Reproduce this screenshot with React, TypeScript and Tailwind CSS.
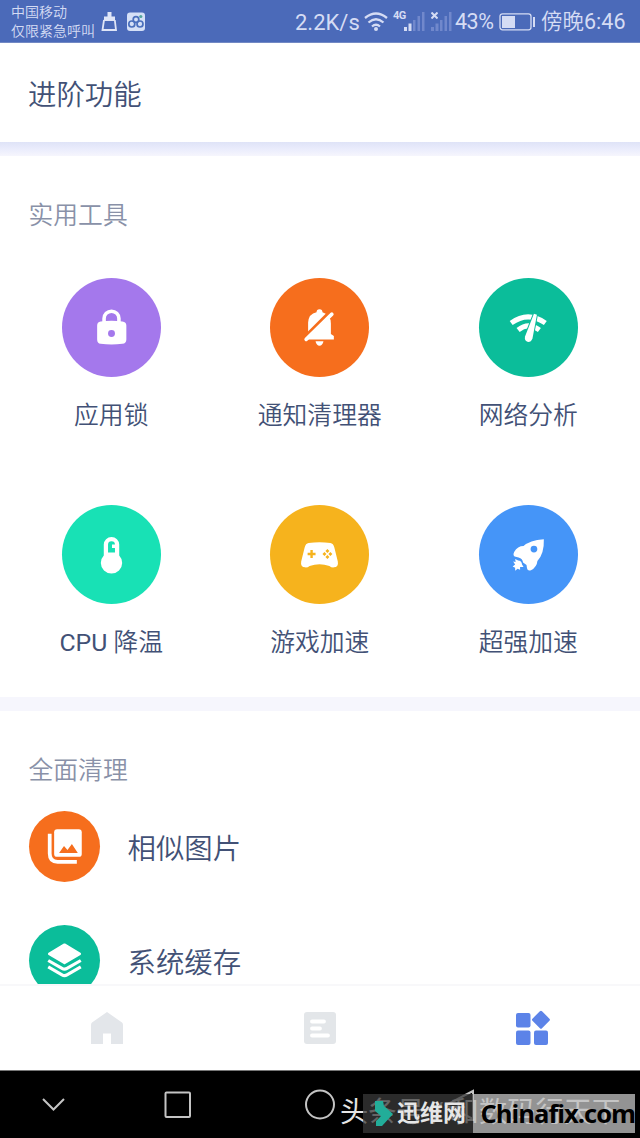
import React from "react";

type Tool = { label: React.ReactNode; color: string; icon: React.ReactNode };

const tools: Tool[] = [
  {
    label: "应用锁",
    color: "bg-[#a478ec]",
    icon: (
      <svg viewBox="0 0 100 100" className="w-full h-full">
        <path d="M42.5 45V41a7.5 7.5 0 0 1 15 0V45" fill="none" stroke="#fff" strokeWidth="3.6" />
        <path d="M39 44Q50 42.5 61 44Q65 44.5 65 48V62Q65 66 61 66.5Q50 68 39 66.5Q35.5 66 35.5 62V48Q35.5 44.5 39 44Z" fill="#fff" />
        <circle cx="50" cy="56" r="3.5" fill="#a478ec" />
      </svg>
    ),
  },
  {
    label: "通知清理器",
    color: "bg-[#f66e1d]",
    icon: (
      <svg viewBox="0 0 100 100" className="w-full h-full">
        <path d="M38.5 60V45Q39 36 47 34.5Q47 31.5 50 31.5Q53 31.5 53 34.5Q61.5 37 61.5 46V56.5L64.5 58.5V62H37Z" fill="#fff" />
        <path d="M46 64H54Q53 68.5 50 68.5Q47 68.5 46 64Z" fill="#fff" />
        <path d="M34 60.8L60.5 34.3" stroke="#f66e1d" strokeWidth="3.4" />
        <path d="M36.5 62L62.5 36.5" stroke="#fff" strokeWidth="3.6" strokeLinecap="round" />
      </svg>
    ),
  },
  {
    label: "网络分析",
    color: "bg-[#0bbd9a]",
    icon: (
      <svg viewBox="0 0 100 100" className="w-full h-full" fill="none">
        <path d="M32.5 45.5Q49.5 33 67 45.5" stroke="#fff" strokeWidth="5" />
        <path d="M39.5 52.5Q50 44 61 52.5" stroke="#fff" strokeWidth="5" />
        <path d="M55.5 36L58.5 37L54 61Q52.5 65 49 64.5Q45.5 63 46.5 59Z" fill="#fff" stroke="#0bbd9a" strokeWidth="2" paintOrder="stroke" />
      </svg>
    ),
  },
  {
    label: (
      <>
        <span className="font-normal">CPU</span> 降温
      </>
    ),
    color: "bg-[#18e1b5]",
    icon: (
      <svg viewBox="0 0 100 100" className="w-full h-full">
        <path d="M42.2 51V40a7.8 7.8 0 0 1 15.6 0V51a10.8 10.8 0 1 1-15.6 0Z" fill="#fff" />
        <path d="M46.5 48V40a3.5 3.5 0 0 1 7 0H50.5V43.5H53.5V48Z" fill="#18e1b5" />
      </svg>
    ),
  },
  {
    label: "游戏加速",
    color: "bg-[#f6b31d]",
    icon: (
      <svg viewBox="0 0 100 100" className="w-full h-full">
        <path d="M39 38.5Q50 37 61 38.5Q64 39 65 43L68.5 57Q69.5 62.5 64.5 63Q62 63.2 60 61.5Q50 58 40 61.5Q38 63.2 35.5 63Q30.5 62.5 31.5 57L35 43Q36 39 39 38.5Z" fill="#fff" />
        <path d="M42 45.5V53.5M38 49.5H46" stroke="#f6b31d" strokeWidth="2.4" />
        <path d="M58 44.5l2 2-2 2-2-2zM58 50.5l2 2-2 2-2-2zM55 47.5l2 2-2 2-2-2zM61 47.5l2 2-2 2-2-2z" fill="#f6b31d" />
      </svg>
    ),
  },
  {
    label: "超强加速",
    color: "bg-[#4595f8]",
    icon: (
      <svg viewBox="0 0 100 100" className="w-full h-full" fill="#fff">
        <path d="M65.5 34.5Q66 49 59 56.5Q58.5 62.5 52.5 66Q49 67 48.500 64L48 60.5L44.5 58Q44 54 40 53L36 52Q34 51 35.5 47.5Q39 41.500 45 41.5Q51 35.5 65.5 34.5Z" />
        <path d="M36.5 54.5L39.5 56Q43 56 43.500 60L45 62.5L41.5 62.5L41.5 65.5L39 64.5L36.5 66.5L36.5 63.5L34 62L36.5 60L34.5 57L37 57.5Z" />
        <circle cx="55.5" cy="44.5" r="3.4" fill="#4595f8" />
      </svg>
    ),
  },
];

const cleaners: Tool[] = [
  {
    label: "相似图片",
    color: "bg-[#f66e1d]",
    icon: (
      <svg viewBox="0 0 72 72" className="w-full h-full">
        <path d="M21 23V43Q21 51.5 29 51.5H48.5" fill="none" stroke="#fff" strokeWidth="3.8" />
        <rect x="25.5" y="18.5" width="28" height="28" rx="3" fill="#fff" />
        <path d="M30.5 42.5L35.5 35.5L39 39.5L43.5 33.5L49.5 42.5Z" fill="#f66e1d" />
      </svg>
    ),
  },
  {
    label: "系统缓存",
    color: "bg-[#0bbd9a]",
    icon: (
      <svg viewBox="0 0 72 72" className="w-full h-full">
        <path d="M36 20L51.5 29.2L36 38.4L20.5 29.2Z" fill="#fff" stroke="#fff" strokeWidth="2.6" strokeLinejoin="round" />
        <path d="M19.5 36L33.5 44Q36 45.5 38.5 44L52.5 36M19.5 42.5L33.5 50.5Q36 52 38.5 50.5L52.5 42.5" fill="none" stroke="#fff" strokeWidth="3.2" />
      </svg>
    ),
  },
];

const Signal = ({ first }: { first: string }) => (
  <svg width="21" height="20" viewBox="0 0 21 20" className="shrink-0">
    <g fill="#7188cc">
      <rect x="0" y="15" width="3" height="4" fill={first} />
      <rect x="4.5" y="11.5" width="3" height="7.5" fill={first} />
      <rect x="9" y="8" width="2.5" height="11" />
      <rect x="13.5" y="4" width="2.5" height="15" />
      <rect x="18" y="0" width="2.5" height="19" />
    </g>
  </svg>
);

const StatusBar: React.FC = () => (
  <header className="flex h-[43px] shrink-0 items-start bg-[#4b6ab9] border-b border-[#7289c4] text-[#d5dcf4]">
    <div className="w-[100px] shrink-0 pl-[11px] pt-[3px] text-[14px] leading-[19px] whitespace-nowrap">
      <div>中国移动</div>
      <div>仅限紧急呼叫</div>
    </div>
    <svg width="50" height="24" viewBox="100 10 50 24" className="mt-[10px] shrink-0" fill="none">
      <rect x="107.5" y="12" width="4" height="6" fill="#dfe5f7" />
      <rect x="104" y="16.5" width="11" height="4.5" fill="#dfe5f7" />
      <path d="M104 20L102.5 30H116L114.8 20" stroke="#dfe5f7" strokeWidth="1.8" />
      <rect x="127" y="12.5" width="18" height="18.5" rx="3" fill="#d5e0f7" />
      <circle cx="131.8" cy="24" r="3" stroke="#4b70bd" strokeWidth="1.7" />
      <circle cx="140" cy="24" r="3" stroke="#4b70bd" strokeWidth="1.7" />
      <circle cx="136" cy="19.5" r="2.8" stroke="#4b70bd" strokeWidth="1.7" />
      <circle cx="140.8" cy="16.5" r="1.6" fill="#51a69b" />
    </svg>
    <div className="flex h-[42px] grow items-center pt-0.5">
      <span className="ml-[145px] w-[69px] shrink-0 text-[22px] font-normal">2.2K/s</span>
      <svg width="24" height="20" viewBox="0 0 24 20" fill="none" stroke="#d5dcf4" strokeWidth="2.3" className="shrink-0">
        <path d="M1 6Q12-3 23 6M4.5 10.5Q12 4 19.5 10.5M8 14.5Q12 11 16 14.5" />
        <circle cx="12" cy="17" r="2" fill="#d5dcf4" stroke="none" />
      </svg>
      <span className="ml-[5px] mb-3 w-[11px] shrink-0 text-[11px] font-bold tracking-tighter">4G</span>
      <Signal first="#d5dcf4" />
      <svg width="7" height="7" viewBox="0 0 7 7" className="ml-[6px] mb-3.5 shrink-0" stroke="#d5dcf4" strokeWidth="2">
        <path d="M.5 .5L6.5 6.5M6.5 .5L.5 6.5" />
      </svg>
      <div className="-ml-[7px] flex shrink-0">
        <Signal first="#7188cc" />
      </div>
      <span className="ml-[3px] w-[44px] shrink-0 text-[21.5px] font-normal tracking-[-0.5px]">43%</span>
      <svg width="37" height="18" viewBox="0 0 37 18" className="shrink-0">
        <rect x="1" y=".8" width="31" height="16" rx="2.5" fill="none" stroke="#d5dcf4" strokeWidth="1.3" />
        <rect x="3" y="3" width="13" height="12" fill="#d5dcf4" />
        <rect x="34" y="4" width="2" height="10" fill="#d5dcf4" />
      </svg>
      <span className="ml-[5px] shrink-0 whitespace-nowrap text-[21.5px]">
        傍晚<span className="font-normal">6:46</span>
      </span>
    </div>
  </header>
);

const TabBar: React.FC = () => (
  <nav className="grid h-[86px] shrink-0 grid-cols-3 place-items-center border-t-2 border-[#f8f8fa] bg-white">
    <svg width="34" height="34" viewBox="0 0 34 34">
      <path d="M17 1L32 11.5Q33 12 33 14V33H21V22.5H13V33H1V14Q1 12 2 11.5Z" fill="#e3e6ea" />
    </svg>
    <svg width="32" height="34" viewBox="0 0 32 34">
      <rect y="1" width="32" height="32" rx="3" fill="#e3e6e9" />
      <path d="M8 10.5H20M8 17.5H16M8 24.5H24" stroke="#fff" strokeWidth="3.8" strokeLinecap="round" />
    </svg>
    <svg width="36" height="36" viewBox="0 0 36 36" fill="#5c83e8">
      <rect x="1" y="3" width="14.5" height="14.5" rx="2" />
      <rect x="1" y="20.5" width="14.5" height="14.5" rx="2" />
      <rect x="19" y="20.5" width="14" height="14.5" rx="2" />
      <rect x="19.2" y="3" width="13.5" height="13.5" rx="1.5" transform="rotate(45 25.95 9.75)" />
    </svg>
  </nav>
);

const SystemNav: React.FC = () => (
  <footer className="relative h-[68px] shrink-0 overflow-hidden border-t border-[#777] bg-black">
    <svg width="640" height="67" viewBox="0 0 640 67" fill="none" stroke="#c4c4c4" strokeWidth="2">
      <path d="M43 28L53.5 38.5L64 28" />
      <rect x="165.5" y="21.5" width="24.5" height="24.5" rx="1" />
      <circle cx="320" cy="33.5" r="14" />
      <path d="M473 20V48L446 34Z" />
    </svg>
    <div className="absolute left-[340px] top-[25px] whitespace-nowrap text-[28.3px] leading-[34px] font-normal text-[#e5e5e5]">
      头条号 / 和数码行天下
    </div>
    <div className="absolute left-[363px] top-[23px] flex h-[39px] w-[272px]">
      <div className="flex w-[110px] items-center bg-[#3a3a3a]/75">
        <svg width="34" height="39" viewBox="0 0 34 39">
          <path d="M12 7H20L21 12L30 20L19 32H13V27L18 22L12 17Z" fill="#22ad99" />
        </svg>
        <span className="text-[23px] font-bold leading-none whitespace-nowrap text-[#e6e6e6]">迅维网</span>
      </div>
      <div className="flex w-[162px] items-center justify-end bg-[#bcbcbc]/78 font-['Open_Sans','Noto_Sans',sans-serif] text-[25.5px] font-bold leading-none tracking-[-1px] text-black">
        <span>Chinafix.com</span>
      </div>
    </div>
  </footer>
);

export default function App() {
  return (
    <div className="flex h-[1138px] w-[640px] flex-col overflow-hidden bg-white font-['Roboto','Noto_Sans_CJK_SC',sans-serif] font-[350] text-[#425176]">
      <StatusBar />
      <div className="flex h-[99px] shrink-0 items-center pl-[28px] pt-[7px] text-[28.4px]">
        <h1>进阶功能</h1>
      </div>
      <div className="h-[14px] shrink-0 bg-linear-to-b from-[#dfe3f7] via-[#eaecfc] to-[#f6f6fd]" />

      <section className="flex h-[541px] shrink-0 flex-col">
        <h2 className="pl-[28.5px] pt-[42px] text-[24.8px] leading-[36px] text-[#8991a8]">实用工具</h2>
        <div className="mt-[43.5px] grid grid-cols-[208.5px_208.5px_208.5px] gap-y-[73.5px] pl-[7px]">
          {tools.map((tool, i) => (
            <div key={i} className="flex h-[154px] flex-col items-center">
              <div className={`h-[99px] w-[99px] shrink-0 rounded-full ${tool.color}`}>{tool.icon}</div>
              <span className="mt-[21px] whitespace-nowrap text-[24.8px] leading-[36px]">{tool.label}</span>
            </div>
          ))}
        </div>
      </section>

      <div className="h-[14px] shrink-0 bg-[#f6f6fd]" />

      <section className="h-[273px] shrink-0 overflow-hidden">
        <h2 className="pl-[28.5px] pt-[42px] text-[24.8px] leading-[36px] text-[#8991a8]">全面清理</h2>
        <div className="mt-[21.5px] flex flex-col gap-[43px] pl-[28.5px]">
          {cleaners.map((item, i) => (
            <div key={i} className="flex h-[71px] items-center">
              <div className={`h-[71px] w-[71px] shrink-0 rounded-full ${item.color}`}>{item.icon}</div>
              <span className="ml-[28px] pt-[8px] text-[28.4px]">{item.label}</span>
            </div>
          ))}
        </div>
      </section>

      <TabBar />
      <SystemNav />
    </div>
  );
}
